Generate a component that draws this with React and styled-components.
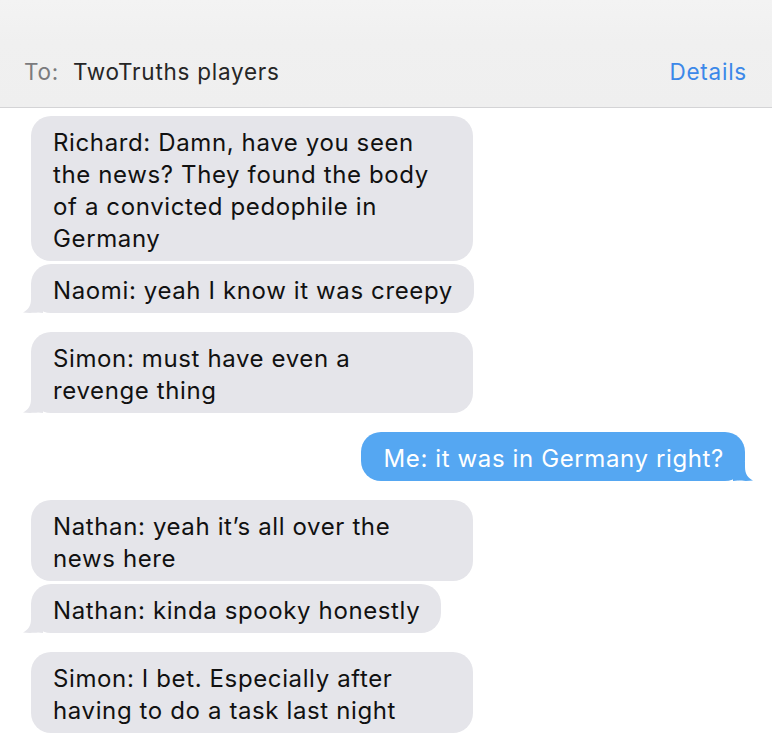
import React from "react";
import styled, { createGlobalStyle } from "styled-components";

const Global = createGlobalStyle`
  html, body { margin: 0; padding: 0; background: #ffffff; }
  body { font-family: Inter, "Noto Sans", Roboto, sans-serif; -webkit-font-smoothing: antialiased; }
`;

const Page = styled.div`
  width: 772px;
  height: 736px;
  overflow: hidden;
  background: #ffffff;
`;

const Header = styled.header`
  height: 108px;
  border-bottom: 1px solid #d4d4d6;
  background: linear-gradient(180deg, #f3f3f3 0%, #f0f0f0 40%, #efefef 100%);
  display: flex;
  align-items: flex-end;
  justify-content: space-between;
  padding: 0 25px 22px 24px;
  box-sizing: border-box;
  font-size: 22.5px;
  letter-spacing: 0.75px;
`;

const To = styled.div`
  display: flex;
  gap: 14px;
`;

const ToLabel = styled.span`
  color: #7b7b7d;
`;

const ToName = styled.span`
  color: #262626;
`;

const DetailsLink = styled.span`
  color: #3b88e9;
`;

const Thread = styled.div`
  display: flex;
  flex-direction: column;
  padding: 8px 27px 0 31px;
`;

const Group = styled.div`
  display: flex;
  flex-direction: column;
  align-items: ${(p) => (p.$me ? "flex-end" : "flex-start")};
  gap: 3px;
  margin-bottom: 19px;
`;

const Bubble = styled.div`
  position: relative;
  width: ${(p) => (p.$full ? "442px" : "auto")};
  box-sizing: border-box;
  padding: 11px 21px 6px 22px;
  border-radius: 20px;
  font-size: 24px;
  line-height: 32px;
  letter-spacing: 0.62px;
  white-space: pre-line;
  background: ${(p) => (p.$me ? "#55a7f2" : "#e5e5ea")};
  color: ${(p) => (p.$me ? "#ffffff" : "#111111")};
`;

const TailSvg = styled.svg`
  position: absolute;
  bottom: 0;
  width: 20px;
  height: 20px;
  ${(p) => (p.$me ? "right: -8px; transform: scaleX(-1);" : "left: -8px;")}
`;

const Tail = ({ me }) => (
  <TailSvg $me={me} viewBox="0 0 20 20" aria-hidden="true">
    <path
      d="M8 1 L20 1 L20 20 L15 19.6 C11 20 5 20.2 0 19.6 C5 17 8 13 8 6 Z"
      fill={me ? "#55a7f2" : "#e5e5ea"}
    />
  </TailSvg>
);

const groups = [
  {
    me: false,
    msgs: [
      ["Richard: Damn, have you seen", "the news? They found the body", "of a convicted pedophile in", "Germany"],
      ["Naomi: yeah I know it was creepy"],
    ],
  },
  { me: false, msgs: [["Simon: must have even a", "revenge thing"]] },
  { me: true, msgs: [["Me: it was in Germany right?"]] },
  {
    me: false,
    msgs: [
      ["Nathan: yeah it\u2019s all over the", "news here"],
      ["Nathan: kinda spooky honestly"],
    ],
  },
  { me: false, msgs: [["Simon: I bet. Especially after", "having to do a task last night"]] },
];

export default function App() {
  return (
    <Page>
      <Global />
      <Header>
        <To>
          <ToLabel>To:</ToLabel>
          <ToName>TwoTruths players</ToName>
        </To>
        <DetailsLink>Details</DetailsLink>
      </Header>
      <Thread>
        {groups.map((g, gi) => (
          <Group key={gi} $me={g.me}>
            {g.msgs.map((lines, mi) => (
              <Bubble key={mi} $me={g.me} $full={lines.length > 1}>
                {lines.join("\n")}
                {mi === g.msgs.length - 1 && gi !== groups.length - 1 && <Tail me={g.me} />}
              </Bubble>
            ))}
          </Group>
        ))}
      </Thread>
    </Page>
  );
}
